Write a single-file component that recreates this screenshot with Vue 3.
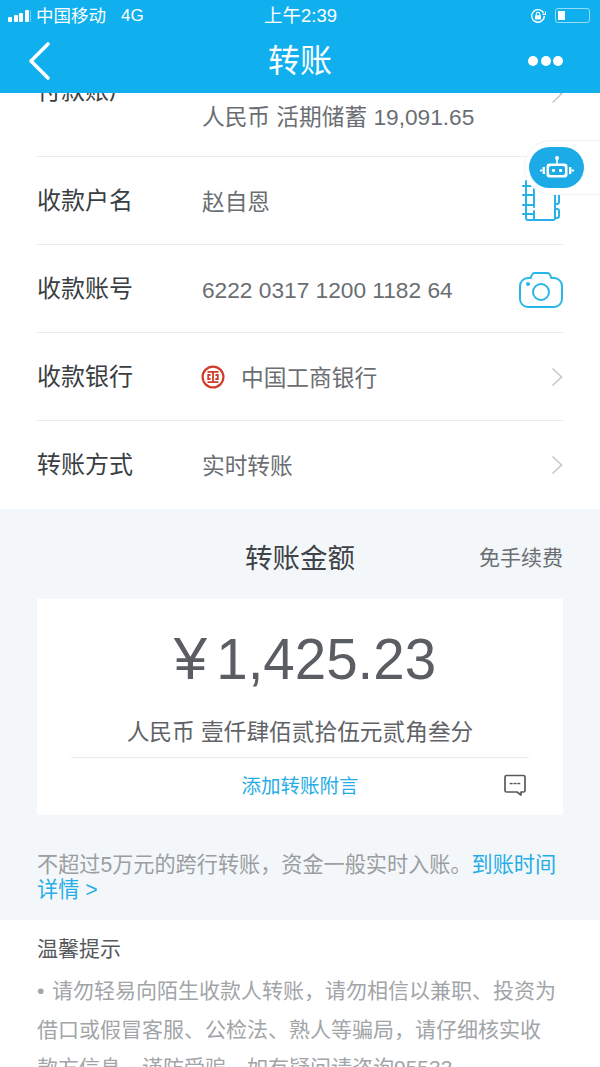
<script setup>
const rows = [
  { label: "收款户名", value: "赵自恩", icon: "book" },
  { label: "收款账号", value: "6222 0317 1200 1182 64", icon: "camera" },
  { label: "收款银行", value: "中国工商银行", icon: "arrow", bank: true },
  { label: "转账方式", value: "实时转账", icon: "arrow" }
];
</script>

<template>
  <div class="page">
    <header class="top">
      <div class="status">
        <div class="status-left">
          <span class="signal"><i></i><i></i><i></i><i></i><i class="off"></i></span>
          <span class="carrier">中国移动</span>
          <span class="net">4G</span>
        </div>
        <div class="clock">上午2:39</div>
        <div class="status-right">
          <svg width="16" height="16" viewBox="0 0 16 16" fill="none" stroke="#fff">
            <path d="M13.600 5A6.300 6.300 0 1 0 14.300 8" stroke-width="1.400" />
            <path d="M15.500 3.400v3h-3" stroke-width="1.100" />
            <rect x="5" y="7.200" width="6" height="4.300" rx="0.500" fill="#fff" stroke="none" />
            <path d="M6.300 7.200V6a1.700 1.700 0 0 1 3.400 0v1.200" stroke-width="1.100" />
          </svg>
          <span class="battery"><span class="level"></span></span>
        </div>
      </div>
      <div class="nav">
        <svg class="back" width="24" height="40" viewBox="0 0 24 40" fill="none" stroke="#fff" stroke-width="3.600" stroke-linecap="round" stroke-linejoin="round">
          <path d="M21 3 4 20l17 17" />
        </svg>
        <h1>转账</h1>
        <div class="more"><i></i><i></i><i></i></div>
      </div>
    </header>

    <main class="scroll">
      <section class="form">
        <div class="row first">
          <span class="label">付款账户</span>
          <div class="value-stack">
            <span class="value">人民币 活期储蓄 19,091.65</span>
          </div>
          <svg class="chev" width="12" height="20" viewBox="0 0 12 20" fill="none" stroke="#c4c8cc" stroke-width="1.600">
            <path d="m1.500 1.500 9 8.500-9 8.500" />
          </svg>
        </div>

        <div v-for="row in rows" :key="row.label" class="row">
          <span class="label">{{ row.label }}</span>
          <svg v-if="row.bank" class="bank" width="24" height="24" viewBox="0 0 24 24" fill="none" stroke="#cf3d2b">
            <circle cx="12" cy="12" r="10.400" stroke-width="2.200" />
            <path d="M6.500 6.800h11M6.500 17.200h11M12 6.800v10.400M9.600 10H7.200v4h2.400M14.400 10h2.400v4h-2.400" stroke-width="1.800" />
          </svg>
          <span class="value" :class="{ 'bank-name': row.bank }">{{ row.value }}</span>

          <svg v-if="row.icon === 'book'" class="tool book" width="38" height="44" viewBox="0 0 38 44" fill="none" stroke="#29b0ea" stroke-width="2" stroke-linecap="round" stroke-linejoin="round">
            <path d="M4 2v37a2 2 0 0 0 2 2h25a2 2 0 0 0 2-2V3" />
            <path d="M12 6v22M12 32v8" />
            <path d="M1 7h10M1 16h10M1 26h10M1 35h10" />
            <path d="M33 15h2a2 2 0 0 1 2 2v6a2 2 0 0 1-2 2h-2M33 30h2a2 2 0 0 1 2 2v5a2 2 0 0 1-2 2h-2" />
          </svg>
          <svg v-else-if="row.icon === 'camera'" class="tool camera" width="44" height="37" viewBox="0 1 44 37" fill="none" stroke="#29b6e8" stroke-width="2" stroke-linejoin="round">
            <path d="M9 7h2.500l1.500-3.200A3 3 0 0 1 15.700 2h12.600a3 3 0 0 1 2.700 1.800L32.500 7H35a8 8 0 0 1 8 8v13a8 8 0 0 1-8 8H9a8 8 0 0 1-8-8V15a8 8 0 0 1 8-8z" />
            <circle cx="22" cy="21" r="8" />
            <circle cx="9" cy="13" r="2" fill="#29b6e8" stroke="none" />
          </svg>
          <svg v-else class="chev" width="12" height="20" viewBox="0 0 12 20" fill="none" stroke="#c4c8cc" stroke-width="1.600">
            <path d="m1.500 1.500 9 8.500-9 8.500" />
          </svg>
        </div>
      </section>

      <section class="amount">
        <div class="amount-head">
          <h2>转账金额</h2>
          <span class="free">免手续费</span>
        </div>
        <div class="card">
          <div class="money"><span class="yen">¥</span>1,425.23</div>
          <div class="cn-money">人民币 壹仟肆佰贰拾伍元贰角叁分</div>
          <div class="remark">
            <span class="remark-link">添加转账附言</span>
            <svg class="remark-icon" width="24" height="24" viewBox="0 0 24 24" fill="none" stroke="#555b60" stroke-width="1.700" stroke-linejoin="round">
              <path d="M3.500 2.500h17a1.500 1.500 0 0 1 1.500 1.500v13.500a1.500 1.500 0 0 1-1.500 1.500H18v3l-4-3H3.500A1.500 1.500 0 0 1 2 17.500V4a1.500 1.500 0 0 1 1.500-1.500z" />
              <path d="M7.500 10.500h1.500M11.300 10.500h1.500M15 10.500h1.500" stroke-linecap="round" />
            </svg>
          </div>
        </div>
        <p class="notice">不超过5万元的跨行转账，资金一般实时入账。<span class="link">到账时间详情 &gt;</span></p>
      </section>

      <section class="tips">
        <h3>温馨提示</h3>
        <p><span class="dot">•</span>请勿轻易向陌生收款人转账，请勿相信以兼职、投资为借口或假冒客服、公检法、熟人等骗局，请仔细核实收款方信息，谨防受骗。如有疑问请咨询95533。</p>
      </section>
    </main>

    <div class="robot-wrap">
      <div class="robot">
        <svg width="34" height="26" viewBox="0 0 34 26" fill="none">
          <circle cx="17" cy="3" r="2" fill="#fff" />
          <path d="M17 4v5" stroke="#fff" stroke-width="1.600" />
          <rect x="6.500" y="8.500" width="21" height="14" rx="3" fill="#fff" />
          <rect x="9" y="11" width="16" height="9" rx="2" fill="#1dabe8" />
          <rect x="12" y="14" width="3" height="3" rx="1" fill="#fff" />
          <rect x="19" y="14" width="3" height="3" rx="1" fill="#fff" />
          <path d="M3.800 12v7M30.200 12v7" stroke="#fff" stroke-width="2.400" />
          <path d="M0.800 15.500h0.800M32.400 15.500h0.800" stroke="#fff" stroke-width="2" stroke-linecap="round" />
        </svg>
      </div>
    </div>
  </div>
</template>

<style>
html,
body {
  margin: 0;
  background: #fff;
}
</style>

<style scoped>
.page {
  position: relative;
  display: flex;
  flex-direction: column;
  width: 600px;
  height: 1067px;
  overflow: hidden;
  background: #fff;
  font-family: "Liberation Sans", "Noto Sans CJK SC", sans-serif;
  color: #55595d;
}

.top {
  flex: none;
  height: 93px;
  background: #10b0ef;
  color: #fff;
}

.status {
  display: grid;
  grid-template-columns: 1fr auto 1fr;
  align-items: center;
  height: 31px;
  padding: 0 10px 0 8px;
  font-size: 17.500px;
  line-height: 22px;
}

.status-left {
  display: flex;
  align-items: center;
}

.signal {
  display: flex;
  align-items: flex-end;
  gap: 1.500px;
  height: 12px;
  margin-right: 5px;
}

.signal i {
  width: 4px;
  background: #fff;
  border-radius: 1px;
}

.signal i:nth-child(1) { height: 5px; }
.signal i:nth-child(2) { height: 7px; }
.signal i:nth-child(3) { height: 9px; }
.signal i:nth-child(4) { height: 12px; }
.signal i.off { width: 1px; height: 12px; opacity: 0.4; }

.net {
  margin-left: 15px;
  font-size: 17px;
}

.clock {
  margin-left: 3px;
  font-size: 18.500px;
}

.status-right {
  display: flex;
  justify-content: flex-end;
  align-items: center;
  gap: 9px;
}

.battery {
  display: block;
  box-sizing: border-box;
  width: 35px;
  height: 15px;
  padding: 2px;
  border: 1px solid rgba(255, 255, 255, 0.55);
  border-radius: 3px;
}

.level {
  display: block;
  width: 7px;
  height: 100%;
  background: #fff;
}

.nav {
  position: relative;
  display: flex;
  align-items: center;
  justify-content: space-between;
  height: 60px;
  padding: 0 37px 0 27px;
}

.back {
  display: block;
}

.nav h1 {
  position: absolute;
  top: 14px;
  left: 0;
  right: 0;
  margin: 0;
  text-align: center;
  font-size: 32px;
  font-weight: 400;
  line-height: 32px;
}

.more {
  display: flex;
  gap: 2.500px;
}

.more i {
  width: 10px;
  height: 10px;
  border-radius: 50%;
  background: #fff;
}

.scroll {
  flex: 1;
  min-height: 0;
  overflow: hidden;
}

.form {
  padding: 0 37px;
}

.row {
  display: flex;
  align-items: center;
  height: 88px;
  box-sizing: border-box;
  border-bottom: 1px solid #e9ebed;
}

.row:last-child {
  height: 88px;
  border-bottom: none;
}

.row.first {
  height: 108px;
  margin-top: -44px;
  align-items: flex-start;
}

.row.first .label {
  margin-top: 26px;
}

.row.first .chev {
  margin-top: 35px;
}

.value-stack {
  display: flex;
  flex-direction: column;
  flex: 1;
  padding-top: 53px;
}

.label {
  flex: none;
  width: 165px;
  font-size: 24px;
  line-height: 32px;
  color: #3a3e42;
}

.value {
  flex: 1;
  margin-top: 2px;
  font-size: 22.700px;
  line-height: 30px;
  color: #6a6e72;
}

.value-stack .value {
  flex: none;
  margin-top: 0;
}

.bank {
  flex: none;
  margin-right: 16px;
  margin-left: -1px;
}

.tool {
  flex: none;
}

.book {
  margin-right: 3px;
}

.camera {
  margin-top: 3px;
}

.chev {
  flex: none;
}

.amount {
  height: 411px;
  box-sizing: border-box;
  background: #f3f7fa;
  padding: 0 37px;
}

.amount-head {
  position: relative;
  display: flex;
  justify-content: flex-end;
  align-items: center;
  height: 90px;
  box-sizing: border-box;
  padding-top: 4px;
}

.amount-head h2 {
  position: absolute;
  left: 0;
  right: 0;
  margin: 0;
  text-align: center;
  font-size: 27.500px;
  font-weight: 400;
  color: #3f4347;
}

.free {
  font-size: 21px;
  color: #6a6e72;
}

.card {
  height: 216px;
  background: #fff;
  padding: 0 34px;
  text-align: center;
}

.money {
  height: 76px;
  padding: 22px 0 0 10px;
  font-size: 56.500px;
  line-height: 76px;
  color: #5a5e62;
}

.yen {
  margin-right: 9px;
  font-size: 60px;
}

.cn-money {
  margin-top: 19px;
  font-size: 22.700px;
  line-height: 32px;
  color: #5f6367;
  padding-bottom: 9px;
  border-bottom: 1px solid #e9ebed;
}

.remark {
  position: relative;
  height: 57px;
  line-height: 57px;
  font-size: 19.500px;
  color: #27ade6;
}

.remark-icon {
  position: absolute;
  right: 2px;
  top: 15px;
}

.notice {
  margin: 37px 0 0;
  font-size: 21.150px;
  line-height: 25px;
  color: #9a9ea2;
}

.link {
  color: #27ade6;
}

.tips {
  padding: 0 43px 0 37px;
}

.tips h3 {
  margin: 14px 0 0;
  font-size: 21px;
  line-height: 29px;
  font-weight: 400;
  color: #55595d;
}

.tips p {
  margin: 9px 0 0;
  font-size: 21px;
  line-height: 38.500px;
  color: #a2a5a8;
}

.dot {
  display: inline-block;
  width: 15px;
}

.robot-wrap {
  position: absolute;
  top: 140px;
  right: 0;
  display: flex;
  align-items: center;
  width: 76px;
  height: 55px;
  padding-left: 4px;
  box-sizing: border-box;
  background: #fff;
  border: 1px solid #f1f3f4;
  border-right: none;
  border-radius: 27px 0 0 27px;
}

.robot {
  display: flex;
  align-items: center;
  justify-content: center;
  width: 55px;
  height: 41px;
  border-radius: 21px;
  background: #1dabe8;
}
</style>
